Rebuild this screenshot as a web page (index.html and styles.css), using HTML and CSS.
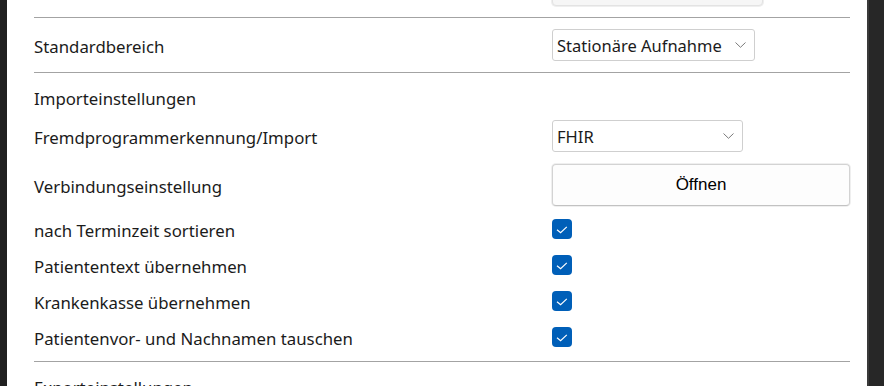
FILE: index.html
```html
<!DOCTYPE html>
<html lang="de">
<head>
    <meta charset="UTF-8">
    <meta name="viewport" content="width=device-width, initial-scale=1.0">
    <title>Einstellungen</title>
    <link rel="stylesheet" href="styles.css">
</head>
<body>
    <div class="frame">
        <div class="edge-left"></div>
        <main class="panel">
            <div class="content">
                <section class="group group-top">
                    <div class="row">
                        <span class="label"></span>
                        <div class="button button-disabled"></div>
                    </div>
                </section>

                <section class="group">
                    <div class="row">
                        <span class="label">Standardbereich</span>
                        <div class="select select-wide">
                            <span>Stationäre Aufnahme</span>
                            <svg class="chevron" width="11" height="6" viewBox="0 0 11 6"><path d="M0.5 0.5 L5.5 5.3 L10.5 0.5" fill="none" stroke="#7a7a7a" stroke-width="1"/></svg>
                        </div>
                    </div>
                </section>

                <section class="group group-import">
                    <div class="row row-heading">
                        <span class="label">Importeinstellungen</span>
                    </div>
                    <div class="row row-select">
                        <span class="label">Fremdprogrammerkennung/Import</span>
                        <div class="select select-narrow">
                            <span>FHIR</span>
                            <svg class="chevron" width="11" height="6" viewBox="0 0 11 6"><path d="M0.5 0.5 L5.5 5.3 L10.5 0.5" fill="none" stroke="#7a7a7a" stroke-width="1"/></svg>
                        </div>
                    </div>
                    <div class="row row-button">
                        <span class="label">Verbindungseinstellung</span>
                        <div class="button">Öffnen</div>
                    </div>
                    <div class="row row-check first">
                        <span class="label">nach Terminzeit sortieren</span>
                        <span class="checkbox"><svg width="20" height="20" viewBox="0 0 20 20"><path d="M5 10.8 L8.6 13.8 L14.8 7.9" fill="none" stroke="#fff" stroke-width="1.2"/></svg></span>
                    </div>
                    <div class="row row-check">
                        <span class="label">Patiententext übernehmen</span>
                        <span class="checkbox"><svg width="20" height="20" viewBox="0 0 20 20"><path d="M5 10.8 L8.6 13.8 L14.8 7.9" fill="none" stroke="#fff" stroke-width="1.2"/></svg></span>
                    </div>
                    <div class="row row-check">
                        <span class="label">Krankenkasse übernehmen</span>
                        <span class="checkbox"><svg width="20" height="20" viewBox="0 0 20 20"><path d="M5 10.8 L8.6 13.8 L14.8 7.9" fill="none" stroke="#fff" stroke-width="1.2"/></svg></span>
                    </div>
                    <div class="row row-check">
                        <span class="label">Patientenvor- und Nachnamen tauschen</span>
                        <span class="checkbox"><svg width="20" height="20" viewBox="0 0 20 20"><path d="M5 10.8 L8.6 13.8 L14.8 7.9" fill="none" stroke="#fff" stroke-width="1.2"/></svg></span>
                    </div>
                </section>

                <section class="group group-export">
                    <div class="row row-heading">
                        <span class="label">Exporteinstellungen</span>
                    </div>
                </section>
            </div>
        </main>
        <div class="edge-right"></div>
    </div>
</body>
</html>
```

FILE: styles.css
```css
html, body {
    margin: 0;
    height: 100%;
}
body {
    font-family: "Noto Sans", "Open Sans", sans-serif;
    font-size: 16.8px;
    color: #1b1b1b;
    background-color: #202020;
}
.frame {
    display: flex;
    height: 100vh;
    overflow: hidden;
}
.edge-left {
    width: 7px;
    flex-shrink: 0;
    background-color: #202020;
}
.edge-right {
    width: 15px;
    flex-shrink: 0;
    background-color: #272727;
    border-left: 2px solid #3a3a3a;
}
.panel {
    flex: 1;
    background: white;
    padding: 0 17px 0 27px;
    overflow: hidden;
}
.content {
    margin-top: -37px;
}
.group {
    padding: 11px 0;
    border-top: 1px solid #a3a3a3;
}
.group-top {
    border-top: none;
}
.group-import {
    padding: 12px 0 6px;
}
.group-export {
    padding: 12px 0 0;
}
.row {
    display: flex;
    align-items: center;
    height: 32px;
}
.label {
    width: 518px;
    flex-shrink: 0;
    padding-top: 2px;
    white-space: nowrap;
}
.row-heading {
    height: 26px;
}
.row-heading .label {
    padding-top: 0;
}
.row-select {
    margin-top: 9px;
}
.row-button {
    height: 42px;
    margin-top: 12px;
}
.row-check {
    height: 36px;
}
.row-check.first {
    margin-top: 5px;
}
.select {
    box-sizing: border-box;
    height: 32px;
    display: flex;
    align-items: center;
    justify-content: space-between;
    padding: 0 8px 0 4px;
    border: 1px solid #cfcfcf;
    border-radius: 3px;
    background: white;
    font-size: 16.5px;
}
.select span {
    padding-top: 1px;
}
.select-wide {
    width: 203px;
}
.select-narrow {
    width: 191px;
}
.chevron {
    display: block;
}
.button {
    box-sizing: border-box;
    flex: 1;
    height: 42px;
    display: flex;
    align-items: center;
    justify-content: center;
    border: 1px solid #d3d3d3;
    border-bottom-color: #c2c2c2;
    border-radius: 4px;
    background-color: #fdfdfd;
    box-shadow: 0 0 0 1px #efefef;
    font-family: "Liberation Sans", Arial, sans-serif;
    font-size: 17px;
    color: #000;
}
.button-disabled {
    flex: 0 0 211px;
    height: 32px;
    background-color: #f6f6f6;
    border-color: #e3e3e3;
}
.checkbox {
    width: 20px;
    height: 20px;
    border-radius: 4px;
    background-color: #005fb8;
    display: block;
}
.checkbox svg {
    display: block;
}
```
